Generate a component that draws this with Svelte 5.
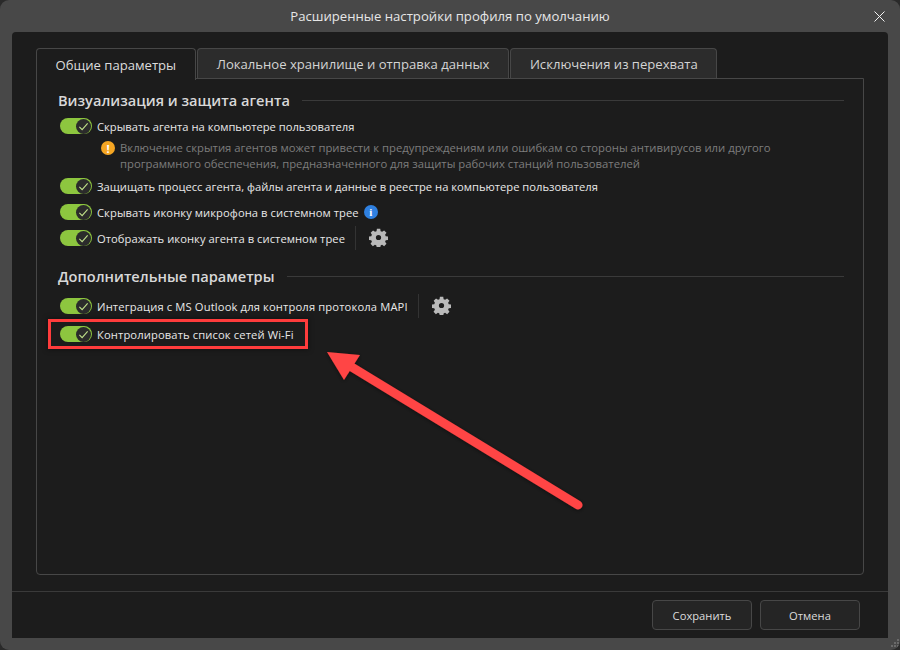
<script>
	const general = [
		{ id: 'hide', label: 'Скрывать агента на компьютере пользователя' },
		{ id: 'protect', label: 'Защищать процесс агента, файлы агента и данные в реестре на компьютере пользователя' },
		{ id: 'mic', label: 'Скрывать иконку микрофона в системном трее', info: true, spread: 0.07 },
		{ id: 'tray', label: 'Отображать иконку агента в системном трее', gear: true, spread: 0.05 }
	];
	const extra = [
		{ id: 'outlook', label: 'Интеграция с MS Outlook для контроля протокола MAPI', gear: true, spread: 0.14 },
		{ id: 'wifi', label: 'Контролировать список сетей Wi-Fi', marked: true, spread: 0.12 }
	];
	const tabs = ['Общие параметры', 'Локальное хранилище и отправка данных', 'Исключения из перехвата'];
	const grip = [[9, 1], [6, 4], [9, 4], [3, 7], [6, 7], [9, 7]];
</script>

{#snippet gearIcon()}
	<svg class="gear" width="19" height="19" viewBox="0 0 24 24">
		<path fill="#b9b9b9" fill-rule="evenodd" d="M14.200 1l.5 3a8.400 8.400 0 0 1 1.900.8l2.500-1.800 3 3-1.800 2.500a8.400 8.400 0 0 1 .8 1.900l3 .5v4.200l-3 .5a8.400 8.400 0 0 1-.8 1.900l1.800 2.500-3 3-2.500-1.800a8.400 8.400 0 0 1-1.900.8l-.5 3h-4.400l-.5-3a8.400 8.400 0 0 1-1.900-.8l-2.500 1.800-3-3 1.800-2.500a8.400 8.400 0 0 1-.8-1.900l-3-.5v-4.200l3-.5a8.400 8.400 0 0 1 .8-1.900L2.100 6l3-3 2.500 1.800a8.400 8.400 0 0 1 1.900-.8l.5-3zM12 8.700a3.300 3.300 0 1 0 0 6.600 3.300 3.300 0 0 0 0-6.600z"/>
	</svg>
{/snippet}

{#snippet row(item)}
	<div class="row" class:marked={item.marked}>
		<span class="toggle">
			<span class="knob">
				<svg width="11" height="11" viewBox="0 0 12 12"><path d="M1.500 6.500l3 3 6-7" fill="none" stroke="#c0e08a" stroke-width="1.200"/></svg>
			</span>
		</span>
		<span class="label" style:letter-spacing={item.spread ? `${item.spread}px` : null}>{item.label}</span>
		{#if item.info}
			<span class="info">i</span>
		{/if}
		{#if item.gear}
			<span class="sep"></span>
			{@render gearIcon()}
		{/if}
	</div>
{/snippet}

<div class="window">
	<header class="titlebar">
		<span class="title">Расширенные настройки профиля по умолчанию</span>
		<svg class="close" width="11" height="11" viewBox="0 0 11 11"><path d="M.5.5l10 10M10.500.5l-10 10" stroke="#f2f2f2" stroke-width="1"/></svg>
	</header>
	<div class="client">
		<div class="content">
			<nav class="tabs">
				{#each tabs as tab, i}
					<div class="tab" class:active={i === 0}>{tab}</div>
				{/each}
			</nav>
			<div class="panel">
				<section>
					<div class="heading"><h2>Визуализация и защита агента</h2><span class="rule"></span></div>
					{@render row(general[0])}
					<div class="warning">
						<span class="warn-icon">!</span>
						<p>Включение скрытия агентов может привести к предупреждениям или ошибкам со стороны антивирусов или другого программного обеспечения, предназначенного для защиты рабочих станций пользователей</p>
					</div>
					{#each general.slice(1) as item}
						{@render row(item)}
					{/each}
				</section>
				<section class="second">
					<div class="heading"><h2>Дополнительные параметры</h2><span class="rule"></span></div>
					{#each extra as item}
						{@render row(item)}
					{/each}
				</section>
			</div>
		</div>
		<footer class="footer">
			<button>Сохранить</button>
			<button>Отмена</button>
		</footer>
	</div>
	<svg class="grip" width="12" height="12" viewBox="0 0 12 12">
		{#each grip as [x, y]}
			<rect {x} {y} width="2" height="2" fill="#6a6a6a" />
		{/each}
	</svg>
	<svg class="arrow" width="300" height="200" viewBox="0 0 300 200">
		<defs>
			<filter id="shadow" x="-10%" y="-10%" width="120%" height="120%">
				<feDropShadow dx="0" dy="1" stdDeviation="2" flood-color="#000" flood-opacity="0.45"/>
			</filter>
		</defs>
		<g filter="url(#shadow)" fill="#ff4444">
			<path d="M258 165 L30 26" stroke="#ff4444" stroke-width="9" stroke-linecap="round" fill="none"/>
			<path d="M7 12 L40 15 L24 40 Z"/>
		</g>
	</svg>
</div>

<style>
	:global(body) {
		margin: 0;
		background: #2a2a2a;
	}
	.window {
		position: relative;
		width: 900px;
		height: 650px;
		display: flex;
		flex-direction: column;
		background: #484848;
		border-radius: 9px;
		font-family: 'Open Sans', 'Noto Sans', sans-serif;
		font-size: 11.200px;
		color: #e8e8e8;
		overflow: hidden;
	}
	.titlebar {
		height: 32px;
		flex: none;
		display: flex;
		align-items: center;
		justify-content: center;
		position: relative;
	}
	.title {
		font-size: 13.150px;
		color: #e6e6e6;
	}
	.close {
		position: absolute;
		right: 15px;
		top: 11px;
	}
	.client {
		flex: 1;
		margin: 0 12px 12px;
		background: #1c1c1c;
		border-radius: 4px 4px 0 0;
		display: flex;
		flex-direction: column;
		min-height: 0;
	}
	.content {
		flex: 1;
		display: flex;
		flex-direction: column;
		padding: 16px 24px;
		min-height: 0;
	}
	.tabs {
		display: flex;
		gap: 1.500px;
		height: 30px;
		flex: none;
		position: relative;
		z-index: 1;
	}
	.tab {
		padding: 0 18.500px;
		display: flex;
		align-items: center;
		font-size: 13.100px;
		color: #d4d4d4;
		background: #2c2c2c;
		border: 1px solid #474747;
		border-bottom: none;
		border-radius: 4px 4px 0 0;
	}
	.tab.active {
		background: #1c1c1c;
		height: 31px;
		color: #dcdcdc;
	}
	.panel {
		flex: 1;
		border: 1px solid #474747;
		border-radius: 0 0 4px 4px;
		padding: 11px 19px 11px 21px;
	}
	.heading {
		display: flex;
		align-items: center;
		gap: 12px;
		height: 20px;
		margin-bottom: 3px;
	}
	h2 {
		margin: 0;
		font-size: 14.600px;
		font-weight: 600;
		color: #d8d8d8;
		white-space: nowrap;
	}
	.rule {
		flex: 1;
		height: 1px;
		background: #3a3a3a;
	}
	.second {
		margin-top: 15px;
	}
	.second .heading {
		margin-bottom: 7px;
	}
	.row {
		display: flex;
		align-items: center;
		height: 26px;
		color: #e8e8e8;
		position: relative;
		width: max-content;
	}
	.row.marked {
		outline: 3px solid #ff3c3c;
		outline-offset: -1px;
		box-shadow: 0 0 5px 3px rgba(0, 0, 0, 0.35);
		padding: 0 12px 0 8px;
		margin: 2px 0 0 -8px;
		height: 26px;
	}
	.toggle {
		width: 32px;
		height: 16px;
		border-radius: 8px;
		background: #8dc63f;
		margin-left: 2px;
		margin-right: 5px;
		display: flex;
		justify-content: flex-end;
		align-items: center;
		padding-right: 1px;
		box-sizing: border-box;
		flex: none;
	}
	.knob {
		width: 15px;
		height: 15px;
		border-radius: 50%;
		background: #2b2b2b;
		display: flex;
		align-items: center;
		justify-content: center;
	}
	.info {
		width: 14px;
		height: 14px;
		margin-left: 5px;
		border-radius: 50%;
		background: #2f80e0;
		color: #fff;
		font-size: 11px;
		font-weight: 700;
		font-family: 'Liberation Serif', serif;
		display: flex;
		align-items: center;
		justify-content: center;
	}
	.sep {
		width: 1px;
		height: 24px;
		background: #333;
		margin: 0 13px 0 10px;
	}
	.gear {
		margin-top: -2px;
	}
	.warning {
		display: flex;
		gap: 5px;
		margin: 1px 0 1px 43px;
		color: #7d7d7d;
		font-size: 11.300px;
	}
	.warn-icon {
		width: 14px;
		height: 14px;
		flex: none;
		margin-top: 1px;
		border-radius: 50%;
		background: #f5a623;
		color: #fff;
		font-size: 11px;
		font-weight: 700;
		display: flex;
		align-items: center;
		justify-content: center;
	}
	.warning p {
		margin: 0;
		line-height: 16px;
		max-width: 680px;
	}
	.footer {
		flex: none;
		height: 46px;
		border-top: 1px solid #3a3a3a;
		display: flex;
		justify-content: flex-end;
		align-items: center;
		gap: 8px;
		padding-right: 28px;
	}
	button {
		width: 100px;
		height: 30px;
		background: #252525;
		border: 1px solid #474747;
		border-radius: 4px;
		color: #dcdcdc;
		font: inherit;
	}
	.grip {
		position: absolute;
		right: 0;
		bottom: 0;
	}
	.arrow {
		position: absolute;
		left: 320px;
		top: 340px;
		pointer-events: none;
	}
</style>
